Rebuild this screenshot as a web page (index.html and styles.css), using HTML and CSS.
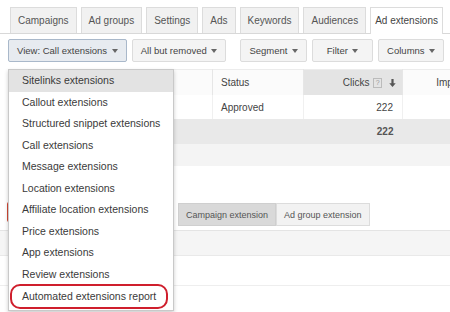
FILE: index.html
```html
<!DOCTYPE html>
<html lang="en">

<head>
    <meta charset="UTF-8">
    <meta name="viewport" content="width=device-width, initial-scale=1.0">
    <title>Ad extensions</title>
    <link rel="stylesheet" href="styles.css">
</head>

<body>
    <div class="tabs">
        <div class="tab">Campaigns</div>
        <div class="tab">Ad groups</div>
        <div class="tab">Settings</div>
        <div class="tab">Ads</div>
        <div class="tab">Keywords</div>
        <div class="tab">Audiences</div>
        <div class="tab active">Ad extensions</div>
    </div>

    <div class="toolbar">
        <button class="tool-button view-button">View: Call extensions <span class="caret"></span></button>
        <button class="tool-button">All but removed <span class="caret"></span></button>
        <button class="tool-button segment-button">Segment <span class="caret"></span></button>
        <button class="tool-button filter-button">Filter <span class="caret"></span></button>
        <button class="tool-button">Columns <span class="caret"></span></button>
    </div>

    <div class="report">
        <table class="grid">
            <tr class="head-row">
                <th class="col-name"></th>
                <th class="col-status">Status</th>
                <th class="col-clicks sorted">
                    Clicks <span class="help">?</span>
                    <svg class="sort-arrow" width="7" height="8" viewBox="0 0 7 8">
                        <path d="M3.5 8 L0.3 4.3 H2.4 V0 H4.6 V4.3 H6.7 Z" fill="#555" />
                    </svg>
                </th>
                <th class="col-impr">Impr.</th>
            </tr>
            <tr class="data-row">
                <td></td>
                <td>Approved</td>
                <td class="num">222</td>
                <td></td>
            </tr>
            <tr class="total-row">
                <td></td>
                <td></td>
                <td class="num">222</td>
                <td></td>
            </tr>
            <tr class="blank-row">
                <td colspan="4"></td>
            </tr>
        </table>

        <div class="ext-bar">
            <span class="add-button"></span>
            <div class="switch">
                <button class="switch-button on">Campaign extension</button>
                <button class="switch-button">Ad group extension</button>
            </div>
        </div>
        <div class="band"></div>
        <div class="empty-row"></div>

        <ul class="menu">
            <li class="menu-item hover">Sitelinks extensions</li>
            <li class="menu-item">Callout extensions</li>
            <li class="menu-item">Structured snippet extensions</li>
            <li class="menu-item">Call extensions</li>
            <li class="menu-item">Message extensions</li>
            <li class="menu-item">Location extensions</li>
            <li class="menu-item">Affiliate location extensions</li>
            <li class="menu-item">Price extensions</li>
            <li class="menu-item">App extensions</li>
            <li class="menu-item">Review extensions</li>
            <li class="menu-item flagged">Automated extensions report</li>
        </ul>
    </div>
</body>

</html>
```

FILE: styles.css
```css
body {
    margin: 0;
    width: 450px;
    height: 312px;
    overflow: hidden;
    background-color: #fff;
    color: #444;
    font-family: "Liberation Sans", Arial, sans-serif;
}

/* Tabs */
.tabs {
    display: flex;
    gap: 4px;
    padding: 7px 0 0 10px;
    border-bottom: 1px solid #d8d8d8;
}

.tab {
    height: 25px;
    line-height: 25px;
    padding: 0 7px;
    font-size: 10px;
    color: #555;
    background-color: #f1f1f1;
    border: 1px solid #dcdcdc;
    border-bottom: none;
}

.tab.active {
    background-color: #fff;
    color: #444;
    margin-bottom: -1px;
    height: 26px;
    padding: 0 4px;
}

/* Toolbar */
.toolbar {
    display: flex;
    gap: 5px;
    padding: 5px 0 0 8px;
}

.tool-button {
    flex-shrink: 0;
    height: 23px;
    padding: 0 8px;
    white-space: nowrap;
    font-family: inherit;
    font-size: 9.5px;
    color: #444;
    background-color: #f4f4f4;
    border: 1px solid #dcdcdc;
    border-radius: 2px;
}

.view-button {
    background-color: #e7ebf0;
    border-color: #a9b8ca;
}

.segment-button {
    margin-left: 9px;
}

.filter-button {
    min-width: 61px;
}

.caret {
    display: inline-block;
    margin-left: 2px;
    vertical-align: middle;
    border-left: 3px solid transparent;
    border-right: 3px solid transparent;
    border-top: 4px solid #666;
}

/* Report */
.report {
    position: relative;
    margin-top: 1px;
}

.grid {
    margin: 7px 0 0 8px;
    border-collapse: collapse;
    font-size: 10px;
    table-layout: fixed;
    width: 459px;
}

.grid th,
.grid td {
    padding: 0 8px;
    text-align: left;
    color: #444;
}

.col-name {
    width: 188px;
}

.col-status {
    width: 74px;
}

.col-clicks {
    width: 84px;
}

.head-row th {
    height: 25px;
    font-weight: normal;
    background-color: #fbfbfb;
    border-top: 1px solid #ececec;
    border-right: 1px solid #e6e6e6;
}

.head-row .sorted {
    background-color: #e4e4e4;
    text-align: right;
    padding-right: 6px;
}

.head-row .col-impr {
    text-align: right;
    border-right: none;
}

.help {
    display: inline-block;
    width: 7px;
    height: 8px;
    line-height: 8px;
    margin: 0 4px 0 1px;
    font-size: 7px;
    text-align: center;
    color: #999;
    border: 1px solid #bbb;
    vertical-align: middle;
}

.sort-arrow {
    vertical-align: middle;
}

.grid .num {
    text-align: right;
    padding-right: 9px;
}

.data-row td {
    height: 24px;
    background-color: #fff;
    border-right: 1px solid #f0f0f0;
}

.total-row td {
    height: 25px;
    background-color: #e9e9e9;
    font-weight: bold;
    color: #555;
}

.blank-row td {
    height: 22px;
    background-color: #f4f4f4;
}

.ext-bar {
    display: flex;
    align-items: flex-start;
    margin-top: 37px;
    padding-left: 7px;
}

.add-button {
    width: 120px;
    height: 20px;
    margin-top: -1px;
    background-color: #d14836;
    border-radius: 2px;
}

.switch {
    display: flex;
    margin-left: 51px;
}

.switch-button {
    height: 23px;
    padding: 0 7px;
    white-space: nowrap;
    font-family: inherit;
    font-size: 9px;
    color: #555;
    background-color: #f2f2f2;
    border: 1px solid #dcdcdc;
}

.switch-button.on {
    background-color: #d9d9d9;
    border-color: #cfcfcf;
}

.band {
    margin-top: 4px;
    height: 24px;
    background-color: #f5f5f5;
    border-top: 1px solid #e4e4e4;
    border-bottom: 1px solid #e9e9e9;
}

.empty-row {
    height: 29px;
    border-bottom: 1px solid #eeeeee;
}

/* Dropdown */
.menu {
    position: absolute;
    top: 0;
    left: 8px;
    width: 164px;
    margin: 0;
    padding: 0 0 1px;
    list-style: none;
    background-color: #fff;
    border: 1px solid #c9c9c9;
    box-shadow: 0 2px 4px rgba(0, 0, 0, 0.2);
}

.menu-item {
    height: 21.5px;
    line-height: 21.5px;
    padding-left: 13px;
    font-size: 10.5px;
    color: #3a3a3a;
    white-space: nowrap;
}

.menu-item.hover {
    background-color: #e3e3e3;
}

.menu-item.flagged {
    height: 21px;
    line-height: 21px;
    margin: -1px 5px 0 1px;
    padding-left: 10px;
    border: 2px solid #cf1f2d;
    border-radius: 10px;
}
```
